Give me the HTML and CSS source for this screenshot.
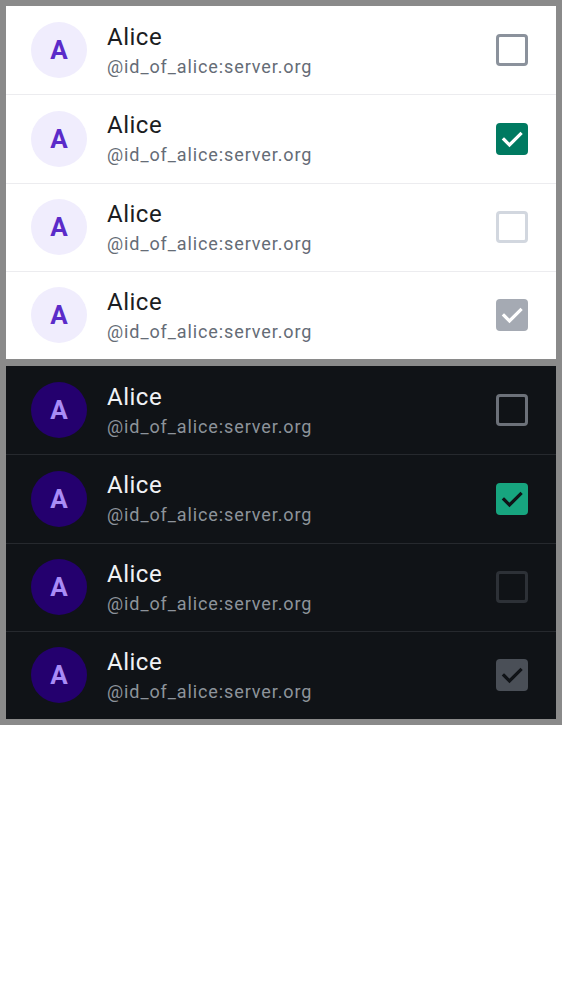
FILE: index.html
```html
<!DOCTYPE html>
<html>
<head>
<meta charset="utf-8">
<link rel="stylesheet" href="styles.css">
</head>
<body>
<div class="frame">
  <div class="panel light">
    <div class="row">
      <div class="avatar">A</div>
      <div class="info"><div class="name">Alice</div><div class="id">@id_of_alice:server.org</div></div>
      <div class="cb cb-off"></div>
    </div>
    <div class="row">
      <div class="avatar">A</div>
      <div class="info"><div class="name">Alice</div><div class="id">@id_of_alice:server.org</div></div>
      <div class="cb cb-on"><svg viewBox="0 0 32 32"><path d="M8 16.5 L13.5 22 L24.5 11" /></svg></div>
    </div>
    <div class="row">
      <div class="avatar">A</div>
      <div class="info"><div class="name">Alice</div><div class="id">@id_of_alice:server.org</div></div>
      <div class="cb cb-dis-off"></div>
    </div>
    <div class="row">
      <div class="avatar">A</div>
      <div class="info"><div class="name">Alice</div><div class="id">@id_of_alice:server.org</div></div>
      <div class="cb cb-dis-on"><svg viewBox="0 0 32 32"><path d="M8 16.5 L13.5 22 L24.5 11" /></svg></div>
    </div>
  </div>
  <div class="panel dark">
    <div class="row">
      <div class="avatar">A</div>
      <div class="info"><div class="name">Alice</div><div class="id">@id_of_alice:server.org</div></div>
      <div class="cb cb-off"></div>
    </div>
    <div class="row">
      <div class="avatar">A</div>
      <div class="info"><div class="name">Alice</div><div class="id">@id_of_alice:server.org</div></div>
      <div class="cb cb-on"><svg viewBox="0 0 32 32"><path d="M8 16.5 L13.5 22 L24.5 11" /></svg></div>
    </div>
    <div class="row">
      <div class="avatar">A</div>
      <div class="info"><div class="name">Alice</div><div class="id">@id_of_alice:server.org</div></div>
      <div class="cb cb-dis-off"></div>
    </div>
    <div class="row">
      <div class="avatar">A</div>
      <div class="info"><div class="name">Alice</div><div class="id">@id_of_alice:server.org</div></div>
      <div class="cb cb-dis-on"><svg viewBox="0 0 32 32"><path d="M8 16.5 L13.5 22 L24.5 11" /></svg></div>
    </div>
  </div>
</div>
</body>
</html>
```
FILE: styles.css
```css
* { box-sizing: border-box; }
body {
  margin: 0;
  background: #ffffff;
  font-family: Roboto, "Liberation Sans", sans-serif;
}
.frame {
  background: #8a8a8a;
  padding: 6px;
  display: flex;
  flex-direction: column;
  gap: 7px;
}
.panel {
  display: flex;
  flex-direction: column;
}
.row {
  height: 88.25px;
  display: flex;
  align-items: center;
  padding: 0 28px 0 25px;
}
.row + .row { border-top: 1px solid; }
.avatar {
  width: 56px;
  height: 56px;
  border-radius: 50%;
  display: flex;
  align-items: center;
  justify-content: center;
  font-weight: 700;
  font-size: 26px;
  flex: none;
}
.info {
  flex: 1;
  margin-left: 20px;
  display: flex;
  flex-direction: column;
  gap: 5px;
}
.name {
  font-size: 24px;
  line-height: 28px;
  letter-spacing: 0.5px;
}
.id {
  font-size: 18px;
  line-height: 22px;
  letter-spacing: 0.9px;
}
.cb {
  width: 32px;
  height: 32px;
  border-radius: 4px;
  flex: none;
  display: flex;
}
.cb svg { width: 32px; height: 32px; }
.cb path { fill: none; stroke-width: 3.2; stroke-linecap: square; stroke-linejoin: miter; }

.light { background: #ffffff; }
.light .row + .row { border-color: #ececef; }
.light .avatar { background: #f0edfd; color: #5b2bc9; }
.light .name { color: #1b1d22; }
.light .id { color: #656c76; }
.light .cb-off { border: 3px solid #8b929c; }
.light .cb-on { background: #007a61; }
.light .cb-on path { stroke: #ffffff; }
.light .cb-dis-off { border: 3px solid #d2d7df; }
.light .cb-dis-on { background: #a5aab3; }
.light .cb-dis-on path { stroke: #ffffff; }

.dark { background: #101317; }
.dark .row + .row { border-color: #26292e; }
.dark .avatar { background: #24006e; color: #a98cf6; }
.dark .name { color: #f0f2f5; }
.dark .id { color: #8d939b; }
.dark .cb-off { border: 3px solid #6c7179; }
.dark .cb-on { background: #17a57f; }
.dark .cb-on path { stroke: #101317; }
.dark .cb-dis-off { border: 3px solid #2d3137; }
.dark .cb-dis-on { background: #4a4f57; }
.dark .cb-dis-on path { stroke: #101317; }
```
